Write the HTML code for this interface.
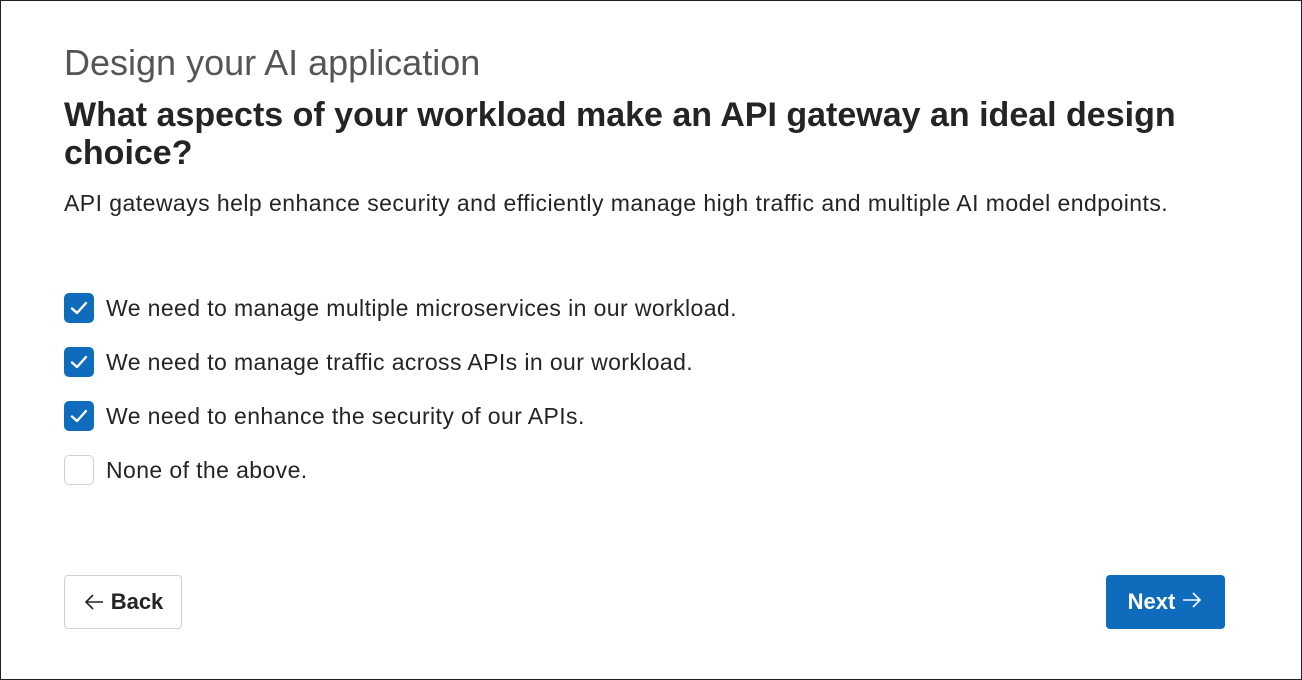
<!DOCTYPE html>
<html><head><style>
html,body{margin:0;padding:0}
body{width:1302px;height:680px;box-sizing:border-box;border:1px solid #222;background:#fff;font-family:"Liberation Sans",sans-serif;color:#242424;position:relative;overflow:hidden}
.t{position:absolute;left:63px;white-space:nowrap}
.cb{position:absolute;left:63px;width:30px;height:30px;box-sizing:border-box;border-radius:5px;background:#0f6cbd}
.cb svg{position:absolute;left:6px;top:7px}
.un{background:#fff;border:1px solid #d1d1d1}
.lab{position:absolute;left:105px;font-size:23px;white-space:nowrap;letter-spacing:0.4px}
.btn{position:absolute;top:574px;height:54px;box-sizing:border-box;border-radius:4px;font-weight:bold;font-size:22px;display:flex;align-items:center;justify-content:center}
</style></head><body>
<div class="t" style="top:41px;font-size:36px;color:#555">Design your AI application</div>
<div class="t" style="top:95px;font-size:34px;font-weight:bold;line-height:38px">What aspects of your workload make an API gateway an ideal design<br>choice?</div>
<div class="t" style="top:189px;font-size:23px;letter-spacing:0.45px">API gateways help enhance security and efficiently manage high traffic and multiple AI model endpoints.</div>
<div class="cb" style="top:292px"><svg width="18" height="16" viewBox="0 0 18 16"><path d="M2 8.5 L7 13 L16 3" stroke="#fff" stroke-width="2.4" fill="none" stroke-linecap="round" stroke-linejoin="round"/></svg></div>
<div class="lab" style="top:294px">We need to manage multiple microservices in our workload.</div>
<div class="cb" style="top:346px"><svg width="18" height="16" viewBox="0 0 18 16"><path d="M2 8.5 L7 13 L16 3" stroke="#fff" stroke-width="2.4" fill="none" stroke-linecap="round" stroke-linejoin="round"/></svg></div>
<div class="lab" style="top:348px">We need to manage traffic across APIs in our workload.</div>
<div class="cb" style="top:400px"><svg width="18" height="16" viewBox="0 0 18 16"><path d="M2 8.5 L7 13 L16 3" stroke="#fff" stroke-width="2.4" fill="none" stroke-linecap="round" stroke-linejoin="round"/></svg></div>
<div class="lab" style="top:402px">We need to enhance the security of our APIs.</div>
<div class="cb un" style="top:454px"></div>
<div class="lab" style="top:456px">None of the above.</div>
<div class="btn" style="left:63px;width:118px;border:1px solid #d1d1d1;color:#242424"><svg width="22" height="20" viewBox="0 0 22 20" style="margin-right:6px"><path d="M20 10H3M10 3L3 10L10 17" stroke="#242424" stroke-width="1.6" fill="none"/></svg>Back</div>
<div class="btn" style="left:1105px;width:119px;background:#0f6cbd;color:#fff">Next<svg width="22" height="20" viewBox="0 0 22 20" style="margin-left:6px;margin-top:-4px"><path d="M2 10H19M12 3L19 10L12 17" stroke="#fff" stroke-width="1.6" fill="none"/></svg></div>
</body></html>
